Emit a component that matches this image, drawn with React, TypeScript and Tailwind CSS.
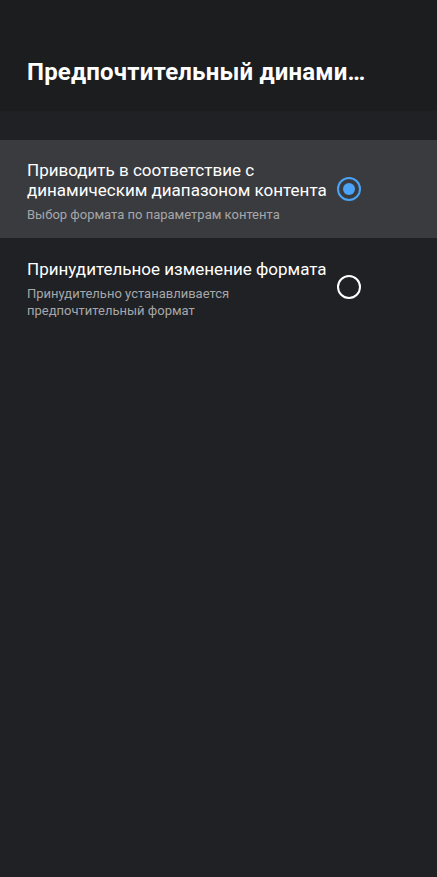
import React from 'react';

const Radio = ({ checked }: { checked: boolean }) => (
  <div
    className={`w-[24px] h-[24px] rounded-full border-2 flex items-center justify-center shrink-0 ${
      checked ? 'border-[#4ba3f7]' : 'border-white'
    }`}
  >
    {checked && <div className="w-[12px] h-[12px] rounded-full bg-[#4ba3f7]" />}
  </div>
);

export default function App() {
  const options = [
    {
      title: 'Приводить в соответствие с динамическим диапазоном контента',
      sub: 'Выбор формата по параметрам контента',
      checked: true,
    },
    {
      title: 'Принудительное изменение формата',
      sub: 'Принудительно устанавливается предпочтительный формат',
      checked: false,
    },
  ];

  return (
    <div className="w-[437px] h-[877px] bg-[#202124] font-['Roboto',sans-serif] flex flex-col">
      <div className="h-[111px] bg-[#1c1d1f] px-[27px] pt-[57px]">
        <h1 className="text-white text-[24px] font-bold leading-[30px] tracking-[0.2px] whitespace-nowrap">
          Предпочтительный динами…
        </h1>
      </div>
      <div className="pt-[29px] flex flex-col">
        {options.map((o) => (
          <div
            key={o.title}
            className={`flex items-center h-[98px] pl-[27px] pr-[76px] ${
              o.checked ? 'bg-[#3a3b3f]' : ''
            }`}
          >
            <div className="flex-1 pt-[4px]">
              <div className="text-white text-[17px] leading-[20px] w-[306px]">{o.title}</div>
              <div className="text-[#a6a7a9] text-[13px] leading-[17px] mt-[6px] w-[270px]">{o.sub}</div>
            </div>
            <Radio checked={o.checked} />
          </div>
        ))}
      </div>
    </div>
  );
}
